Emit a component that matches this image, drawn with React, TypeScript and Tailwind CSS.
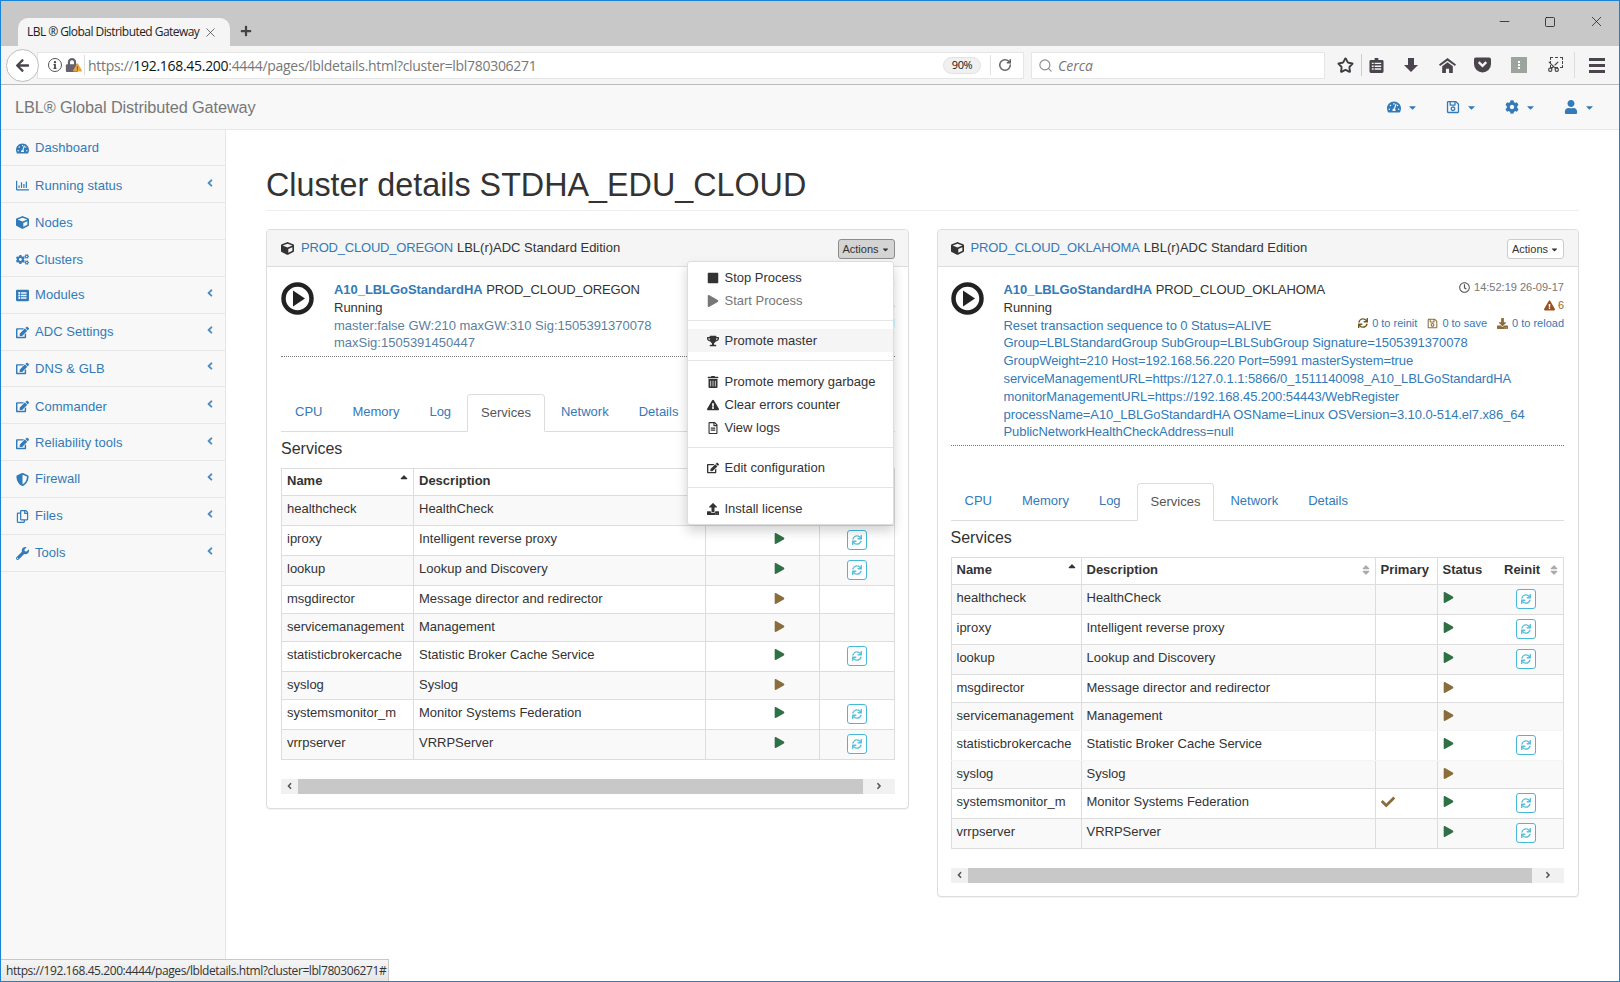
import type { ReactNode } from 'react';
import {
  FaAngleLeft, FaArrowLeft, FaCaretDown, FaCheck, FaCog, FaCogs, FaCube, FaDownload,
  FaEdit, FaExclamationTriangle, FaInfo, FaListAlt, FaLock, FaPlay, FaRegChartBar, FaRegClock, FaRegCopy,
  FaRegFileAlt, FaRegSave, FaShieldAlt, FaSort, FaSortUp, FaStop, FaSync, FaTachometerAlt,
  FaTrashAlt, FaTrophy, FaUpload, FaUser, FaWrench, FaPlus,
} from 'react-icons/fa';
import { RotateCw, Scissors, Search, Star, X, Minus, Square } from 'lucide-react';

const NAV = [
  { label: 'Dashboard', icon: <FaTachometerAlt />, h: 'h-[36px] pt-[1px]' },
  { label: 'Running status', icon: <FaRegChartBar />, h: 'h-[37px] pt-[3px]', more: true },
  { label: 'Nodes', icon: <FaCube />, h: 'h-[37px] pt-[3px]' },
  { label: 'Clusters', icon: <FaCogs />, h: 'h-[37px] pt-[3px]' },
  { label: 'Modules', icon: <FaListAlt />, h: 'h-[37px]', more: true },
  { label: 'ADC Settings', icon: <FaEdit />, h: 'h-[37px]', more: true },
  { label: 'DNS & GLB', icon: <FaEdit />, h: 'h-[36px]', more: true },
  { label: 'Commander', icon: <FaEdit />, h: 'h-[37px] pt-[3px]', more: true },
  { label: 'Reliability tools', icon: <FaEdit />, h: 'h-[37px] pt-[2px]', more: true },
  { label: 'Firewall', icon: <FaShieldAlt />, h: 'h-[37px]', more: true },
  { label: 'Files', icon: <FaRegCopy />, h: 'h-[37px]', more: true },
  { label: 'Tools', icon: <FaWrench />, h: 'h-[37px]', more: true },
];

type Row = { name: string; desc: string; ok: boolean; reinit: boolean; primary?: boolean };

const ROWS: Row[] = [
  { name: 'healthcheck', desc: 'HealthCheck', ok: true, reinit: true },
  { name: 'iproxy', desc: 'Intelligent reverse proxy', ok: true, reinit: true },
  { name: 'lookup', desc: 'Lookup and Discovery', ok: true, reinit: true },
  { name: 'msgdirector', desc: 'Message director and redirector', ok: false, reinit: false },
  { name: 'servicemanagement', desc: 'Management', ok: false, reinit: false },
  { name: 'statisticbrokercache', desc: 'Statistic Broker Cache Service', ok: true, reinit: true },
  { name: 'syslog', desc: 'Syslog', ok: false, reinit: false },
  { name: 'systemsmonitor_m', desc: 'Monitor Systems Federation', ok: true, reinit: true, primary: true },
  { name: 'vrrpserver', desc: 'VRRPServer', ok: true, reinit: true },
];

function ChromeBar() {
  return (
    <>
      <div className="flex h-[45px] shrink-0 items-end bg-[#c8c8c8]">
        <div className="ml-[17px] flex h-[28px] w-[212px] items-center rounded-t-[10px] bg-[#f5f5f5] pl-[9px] text-[12px] text-[#222]">
          <span className="font-[Open_Sans,sans-serif] tracking-[-0.55px] whitespace-nowrap">LBL ® Global Distributed Gateway</span>
          <X size={15} strokeWidth={1.1} className="ml-[4px] shrink-0 text-[#333]" />
        </div>
        <FaPlus className="mb-[9px] ml-[10px] text-[12px] text-[#444]" />
        <div className="mb-[16px] ml-auto flex items-center gap-[32px] pr-[14px] text-[#111]">
          <Minus size={15} strokeWidth={1.2} />
          <Square size={12} strokeWidth={1.5} />
          <X size={17} strokeWidth={1} />
        </div>
      </div>
      <div className="flex h-[39px] shrink-0 items-center border-b border-[#bcbcbc] bg-[#f5f5f5] text-[#4a454d]">
        <div className="z-10 ml-[5px] flex h-[33px] w-[33px] shrink-0 items-center justify-center rounded-full border border-[#bdbdbd] bg-white text-[15px]">
          <FaArrowLeft />
        </div>
        <div className="-ml-[2px] flex h-[27px] w-[987px] shrink-0 items-center border border-[#e6e6e6] bg-white pl-[10px]">
          <span className="flex h-[14px] w-[14px] items-center justify-center rounded-full border border-[#555] text-[8px]"><FaInfo /></span>
          <span className="relative ml-[3px] text-[14px] text-[#66616a]">
            <FaLock />
            <FaExclamationTriangle className="absolute -right-[3px] bottom-0 text-[9px] text-[#e8a33d]" />
          </span>
          <span className="ml-[5px] h-[20px] border-l border-[#ddd]" />
          <span className="ml-[3px] font-[Open_Sans,sans-serif] text-[14px] tracking-[-0.3px] whitespace-nowrap text-[#777]">
            https://<span className="text-[#111]">192.168.45.200</span>:4444/pages/lbldetails.html?cluster=lbl780306271
          </span>
          <span className="ml-auto flex h-[17px] w-[38px] items-center justify-center rounded-full border border-[#e2e2e2] bg-[#f0f0f0] font-[Open_Sans,sans-serif] text-[11px] tracking-[-0.4px] text-[#111]">90%</span>
          <span className="ml-[9px] h-[20px] border-l border-[#e2e2e2]" />
          <RotateCw size={14} strokeWidth={2.6} className="mr-[11px] ml-[7px] text-[#66616a]" />
        </div>
        <div className="ml-[7px] flex h-[27px] w-[294px] shrink-0 items-center border border-[#e6e6e6] bg-white pl-[6px] font-[Open_Sans,sans-serif] text-[14px] text-[#777] italic">
          <Search size={15} strokeWidth={1.8} className="mr-[5px] text-[#8a8a8a]" />
          Cerca
        </div>
        <Star size={17} strokeWidth={2.6} className="ml-[12px] shrink-0 text-[#3f3a42]" />
        <span className="ml-[7px] h-[22px] border-l border-[#ccc]" />
        <ClipboardIcon />
        <svg viewBox="0 0 16 16" className="ml-[19px] h-[16px] w-[16px] shrink-0" fill="#4a454d">
          <path d="M5 1h6v7h4l-7 7-7-7h4z" />
        </svg>
        <svg viewBox="0 0 16 16" className="ml-[20px] h-[17px] w-[17px] shrink-0" fill="#4a454d">
          <path d="M8 1l8 6-1 1.500-7-5-7 5L0 7z" />
          <path d="M8 5l5 3.800V15h-3.500v-4h-3v4H3V8.800z" />
        </svg>
        <PocketIcon />
        <span className="ml-[20px] flex h-[16px] w-[16px] flex-col items-center justify-center gap-[1px] bg-[#9da39d]">
          <i className="h-[2px] w-[2px] bg-white" />
          <i className="h-[2px] w-[2px] bg-white" />
          <i className="h-[2px] w-[2px] bg-white" />
        </span>
        <span className="relative ml-[20px] flex h-[16px] w-[16px] items-end">
          <span className="absolute top-0 right-0 h-[11px] w-[13px] border border-dashed border-[#4a454d]" />
          <Scissors size={13} strokeWidth={2.2} className="relative -rotate-90" />
        </span>
        <span className="ml-[11px] h-[26px] border-l border-[#ddd]" />
        <span className="ml-[14px] flex flex-col gap-[3px]">
          <i className="h-[3px] w-[16px] bg-[#4a454d]" />
          <i className="h-[3px] w-[16px] bg-[#4a454d]" />
          <i className="h-[3px] w-[16px] bg-[#4a454d]" />
        </span>
      </div>
    </>
  );
}

function ClipboardIcon() {
  return (
    <svg viewBox="0 0 16 16" className="ml-[7px] h-[15px] w-[15px] shrink-0" fill="#4a454d">
      <path d="M6 0h4v2h4a1.500 1.500 0 0 1 1.500 1.500v11A1.500 1.500 0 0 1 14 16H2a1.500 1.500 0 0 1-1.500-1.500v-11A1.500 1.500 0 0 1 2 2h4z" />
      <path d="M3 5h2v1.500H3zM6 5h7v1.500H6zM3 8h2v1.500H3zM6 8h7v1.500H6zM3 11h2v1.500H3zM6 11h7v1.500H6z" fill="#f5f5f5" />
    </svg>
  );
}

function PocketIcon() {
  return (
    <svg viewBox="0 0 18 16" className="ml-[18px] h-[16px] w-[17px] shrink-0">
      <path d="M2 0h14a2 2 0 0 1 2 2v5a9 9 0 0 1-18 0V2a2 2 0 0 1 2-2z" fill="#4a454d" />
      <path d="M5 5l4 4 4-4" fill="none" stroke="#f5f5f5" strokeWidth="2.500" />
    </svg>
  );
}

function TopNav() {
  const blue = 'flex items-center gap-[6px] text-[#337ab7]';
  return (
    <div className="flex h-[45px] shrink-0 items-center border-b border-[#e7e7e7] bg-[#f8f8f8] pl-[14px]">
      <span className="text-[16.3px] tracking-[-0.1px] text-[#777]">LBL® Global Distributed Gateway</span>
      <div className="ml-auto flex items-center pr-[24px] text-[14px]">
        <span className={blue}><FaTachometerAlt /><FaCaretDown className="text-[11px]" /></span>
        <span className={blue + ' ml-[28px]'}><FaRegSave /><FaCaretDown className="text-[11px]" /></span>
        <span className={blue + ' ml-[28px]'}><FaCog /><FaCaretDown className="text-[11px]" /></span>
        <span className={blue + ' ml-[28px]'}><FaUser /><FaCaretDown className="text-[11px]" /></span>
      </div>
    </div>
  );
}

function Sidebar() {
  return (
    <aside className="w-[225px] shrink-0 border-r border-[#e7e7e7] bg-[#f8f8f8]">
      {NAV.map((n) => (
        <div key={n.label} className={n.h + ' flex items-center border-b border-[#e7e7e7] pl-[15px] text-[13px] tracking-[0.05px] text-[#337ab7]'}>
          <span className="flex w-[19px] text-[13px]">{n.icon}</span>
          {n.label}
          {n.more && <FaAngleLeft className="mr-[9px] mb-[5px] ml-auto text-[12px] text-[#4f8cc0]" />}
        </div>
      ))}
    </aside>
  );
}

function MetaInfo() {
  return (
    <div className="float-right -mt-[3px] text-right text-[11px] leading-[18px]">
      <div className="flex items-center justify-end gap-[4px] text-[#777]"><FaRegClock className="text-[11px] text-[#555]" />14:52:19 26-09-17</div>
      <div className="flex items-center justify-end gap-[3px] text-[#a0612f]"><FaExclamationTriangle className="text-[#9c4f22]" />6</div>
      <div className="flex items-center justify-end text-[#337ab7]">
        <FaSync className="mr-[4px] text-[10px] text-[#6f5a22]" />0 to reinit
        <FaRegSave className="mr-[4px] ml-[10px] text-[#8a6d3b]" />0 to save
        <FaDownload className="mr-[4px] ml-[10px] text-[#8a6d3b]" />0 to reload
      </div>
    </div>
  );
}

function Tabs() {
  const tabs = ['CPU', 'Memory', 'Log', 'Services', 'Network', 'Details'];
  return (
    <div className="mt-[36.5px] flex h-[38px] gap-[2px] border-b border-[#ddd] text-[13px]">
      {tabs.map((t) =>
        t === 'Services' ? (
          <span key={t} className="flex h-[38px] items-center rounded-t-[4px] border border-[#ddd] border-b-white px-[13px] text-[#555]">{t}</span>
        ) : (
          <span key={t} className="flex h-[37px] items-center px-[14px] text-[#337ab7]">{t}</span>
        ),
      )}
    </div>
  );
}

function ServicesTable({ primary }: { primary: boolean }) {
  const th = 'h-[27px] border border-[#ddd] px-[5px] pb-[1px] text-left align-middle font-bold text-[#333]';
  return (
    <table className="w-full table-fixed border-collapse text-[13px] leading-[18px] text-[#333]">
      <colgroup>
        <col className={primary ? 'w-[130px]' : 'w-[132px]'} />
        <col className={primary ? 'w-[294px]' : 'w-[292px]'} />
        {primary && <col className="w-[62px]" />}
        <col className={primary ? 'w-[60px]' : 'w-[114px]'} />
        <col />
      </colgroup>
      <thead>
        <tr>
          <th className={th}><div className="relative">Name<FaSortUp className="absolute top-[2px] -right-[2px] text-[12px]" /></div></th>
          <th className={th}><div className="relative">Description<FaSort className="absolute top-[3px] -right-[2px] text-[12px] text-[#aaa]" /></div></th>
          {primary && <th className={th}>Primary</th>}
          <th className={th + ' border-r-0'}>Status</th>
          <th className={th + ' border-l-0'}><div className="relative pl-[2px]">Reinit<FaSort className="absolute top-[3px] -right-[2px] text-[12px] text-[#aaa]" /></div></th>
        </tr>
      </thead>
      <tbody>
        {ROWS.map((r, i) => {
          const faint = primary && (r.name === 'servicemanagement' || r.name === 'statisticbrokercache');
          const td = 'border border-[#ddd] px-[5px] pt-[4.5px] align-top ' + (faint ? 'border-b-[#f4f4f4] ' : '');
          return (
            <tr key={r.name} className={(i % 2 === 0 ? 'bg-[#f9f9f9] ' : '') + (r.reinit ? 'h-[30px]' : 'h-[28px]')}>
              <td className={td + 'whitespace-nowrap'}>{r.name}</td>
              <td className={td}>{r.desc}</td>
              {primary && <td className={td}>{r.primary && <FaCheck className="mt-[2px] text-[14px] text-[#8a6d3b]" />}</td>}
              <td className={td + (primary ? 'border-r-0' : 'pl-[68px]')}>
                <FaPlay className={(r.ok ? 'text-[#2f7044]' : 'text-[#8a6d3b]') + ' mt-[3px] text-[11px]'} />
              </td>
              <td className={td + (primary ? 'border-l-0' : '')}>
                {r.reinit && (
                  <span className={(primary ? 'ml-[14px] ' : 'ml-[22px] ') + 'flex h-[20px] w-[20px] items-center justify-center rounded-[3px] border border-[#46b8da] bg-white text-[10px] text-[#5bc0de]'}>
                    <FaSync />
                  </span>
                )}
              </td>
            </tr>
          );
        })}
      </tbody>
    </table>
  );
}

function Scrollbar() {
  return (
    <div className="mt-[19px] flex h-[15px] items-center bg-[#f1f1f1] text-[10px] text-[#555]">
      <FaAngleLeft className="w-[17px] shrink-0" />
      <div className="h-full flex-1 bg-[#c8c8c8]" />
      <span className="flex w-[32px] justify-center"><FaAngleLeft className="rotate-180" /></span>
    </div>
  );
}

function Panel({ name, actionsOpen, lines, menu }: { name: string; actionsOpen: boolean; lines: string[]; menu?: ReactNode }) {
  return (
    <section className="relative flex-1 rounded-[4px] border border-[#ddd] bg-white shadow-[0_1px_1px_rgba(0,0,0,0.05)]">
      <div className={(actionsOpen ? 'pr-[13px] pl-[14px] ' : 'pr-[14px] pl-[13px] ') + 'flex h-[37px] items-center justify-between rounded-t-[4px] border-b border-[#ddd] bg-[#f5f5f5] text-[13px] text-[#333]'}>
        <div className="flex items-center">
          <FaCube className="mr-[7px] text-[13px]" />
          <span className={(actionsOpen ? 'tracking-[-0.2px] ' : 'tracking-[-0.1px] ') + 'mr-[4px] text-[#337ab7]'}>{name}</span>LBL(r)ADC Standard Edition
        </div>
        <span className={(actionsOpen ? 'border-[#8c8c8c] bg-[#d4d4d4] ' : 'border-[#ccc] bg-white ') + 'mt-[2px] flex h-[20px] w-[57px] items-center justify-center gap-[2px] rounded-[3px] border text-[11px] text-[#333]'}>
          Actions<FaCaretDown className="text-[9px]" />
        </span>
      </div>
      {menu}
      <div className={(actionsOpen ? 'pr-[13px] pl-[14px] pb-[14px] ' : 'pr-[14px] pl-[13px] pb-[13px] ') + 'pt-[14px]'}>
        <div className="flex border-b border-dotted border-[#777] pb-[4px] text-[13px] leading-[17.8px]">
          <svg viewBox="0 0 33 33" className="mt-[1px] mr-[20px] h-[33px] w-[33px] shrink-0">
            <circle cx="16.500" cy="16.500" r="14" fill="none" stroke="#222" strokeWidth="4.500" />
            <path d="M12 8.500l12 8-12 8z" fill="#222" />
          </svg>
          <div className="min-w-0 flex-1">
            <MetaInfo />
            <div className="text-[#333]"><span className="font-bold tracking-[-0.05px] text-[#337ab7]">A10_LBLGoStandardHA</span> <span className="tracking-[-0.1px]">{name}</span></div>
            <div className="text-[#333]">Running</div>
            {lines.map((l) => (
              <div key={l} className={actionsOpen ? 'whitespace-nowrap text-[#5b7f9f]' : 'whitespace-nowrap tracking-[-0.08px] text-[#337ab7]'}>{l}</div>
            ))}
          </div>
        </div>
        <Tabs />
        <div className="flex h-[36px] items-center pb-[2px] text-[16px] text-[#333]">Services</div>
        <ServicesTable primary={!actionsOpen} />
        <Scrollbar />
      </div>
    </section>
  );
}

function MenuItem({ icon, label, muted, active }: { icon: ReactNode; label: string; muted?: boolean; active?: boolean }) {
  return (
    <div className={(active ? 'bg-[#f5f5f5] ' : '') + (muted ? 'text-[#777] ' : 'text-[#333] ') + 'flex h-[23px] items-center pl-[19px] text-[13px]'}>
      <span className="flex w-[18px] text-[12px]">{icon}</span>
      {label}
    </div>
  );
}

function ActionsMenu() {
  const hr = <div className="my-[8px] h-px bg-[#e5e5e5]" />;
  return (
    <div className="absolute top-[31px] right-[14px] z-20 w-[207px] rounded-[3px] border border-[#ddd] bg-white py-[4px] shadow-[0_6px_12px_rgba(0,0,0,0.175)]">
      <MenuItem icon={<FaStop />} label="Stop Process" />
      <MenuItem icon={<FaPlay />} label="Start Process" muted />
      {hr}
      <MenuItem icon={<FaTrophy />} label="Promote master" active />
      <div className="mt-[8px] mb-[9px] h-px bg-[#e5e5e5]" />
      <MenuItem icon={<FaTrashAlt />} label="Promote memory garbage" />
      <MenuItem icon={<FaExclamationTriangle />} label="Clear errors counter" />
      <MenuItem icon={<FaRegFileAlt />} label="View logs" />
      {hr}
      <MenuItem icon={<FaEdit />} label="Edit configuration" />
      <div className="mt-[8px] mb-[9px] h-px bg-[#e5e5e5]" />
      <MenuItem icon={<FaUpload />} label="Install license" />
    </div>
  );
}

export default function App() {
  return (
    <div className="relative flex h-[982px] w-[1620px] flex-col overflow-hidden border border-[#1883d7] bg-white font-[Liberation_Sans,sans-serif]">
      <ChromeBar />
      <TopNav />
      <div className="flex min-h-0 flex-1">
        <Sidebar />
        <main className="flex-1 pr-[40px] pl-[40px]">
          <h1 className="flex h-[81px] items-end border-b border-[#eee] pb-[3px] text-[32.3px] leading-[44px] text-[#333]">Cluster details STDHA_EDU_CLOUD</h1>
          <div className="mt-[18px] flex items-start gap-[28px]">
            <Panel
              name="PROD_CLOUD_OREGON"
              actionsOpen
              lines={['master:false GW:210 maxGW:310 Sig:1505391370078', 'maxSig:1505391450447']}
              menu={<ActionsMenu />}
            />
            <Panel
              name="PROD_CLOUD_OKLAHOMA"
              actionsOpen={false}
              lines={[
                'Reset transaction sequence to 0 Status=ALIVE',
                'Group=LBLStandardGroup SubGroup=LBLSubGroup Signature=1505391370078',
                'GroupWeight=210 Host=192.168.56.220 Port=5991 masterSystem=true',
                'serviceManagementURL=https://127.0.1.1:5866/0_1511140098_A10_LBLGoStandardHA',
                'monitorManagementURL=https://192.168.45.200:54443/WebRegister',
                'processName=A10_LBLGoStandardHA OSName=Linux OSVersion=3.10.0-514.el7.x86_64',
                'PublicNetworkHealthCheckAddress=null',
              ]}
            />
          </div>
        </main>
      </div>
      <div className="absolute bottom-0 left-0 flex h-[22px] w-[388px] items-center border-t border-r border-[#c8c8c8] bg-linear-to-b from-[#f5f5f5] to-[#e6e6e6] pl-[5px] font-[Open_Sans,sans-serif] text-[12px] tracking-[-0.42px] whitespace-nowrap text-[#333]">
        https://192.168.45.200:4444/pages/lbldetails.html?cluster=lbl780306271#
      </div>
    </div>
  );
}
